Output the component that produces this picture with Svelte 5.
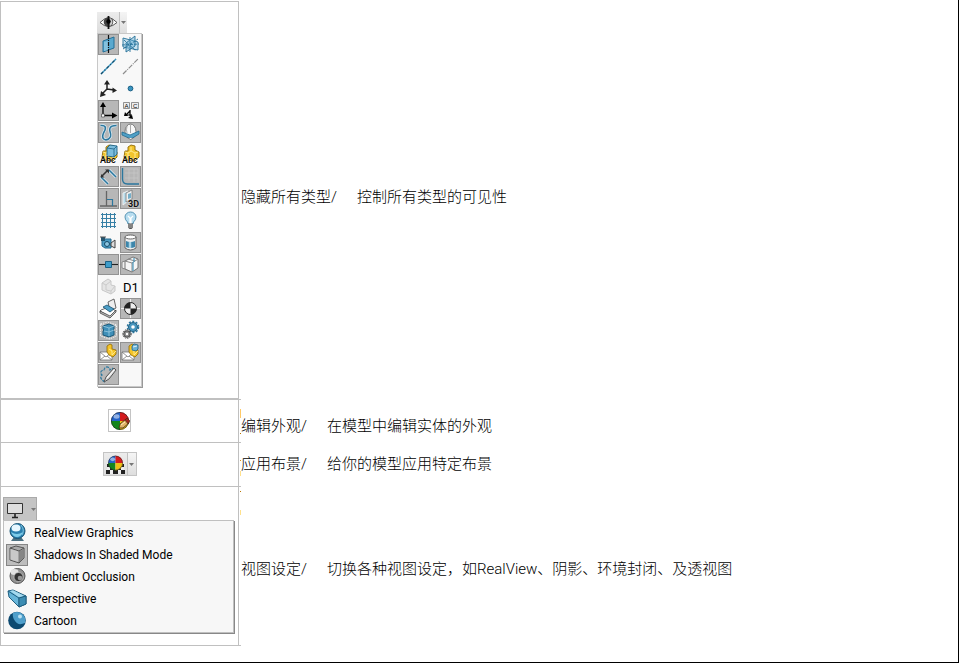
<script>
    const shape = '<path d="M5 7h3V3l3-2 4 1v4l4 2v5l-4 4-9-1-2-3z" fill="#f2c42c" stroke="#8f6a04" stroke-width=".9"/><path d="M5 8l3 1 3-2V3M8 9v6M11 7l4 2v6M15 9l3-1" fill="none" stroke="#ffed94" stroke-width=".9"/>';
    const cube = '<path d="M9 4l3-3 7 1v8l-3 3-7-1z" fill="#7bbcdc" stroke="#1d6286" stroke-width=".9"/><path d="M9 4l7 1 3-3M16 5v8" fill="none" stroke="#1d6286" stroke-width=".8"/>';
    const caption = '<text x="2" y="19" font-size="9" font-family="Roboto, sans-serif" font-weight="500" fill="#000" stroke="#fff" stroke-opacity=".5" stroke-width="1" paint-order="stroke">Abc</text>';
    const envelope = '<path d="M2 10h12v8H2z" fill="#fff" stroke="#777" stroke-width=".8"/><path d="M2 10l6 5 6-5M2 18l5-4M14 18l-5-4" fill="none" stroke="#777" stroke-width=".8"/>';
    const smallShape = '<path d="M9 7V4l3-2 2 1v4l4 1v4l-3 3-4-2-2-3z" fill="#f5c428" stroke="#8f6a04" stroke-width=".8"/><path d="M11 7l3 2v4l4-4" fill="none" stroke="#ffed94" stroke-width=".9"/>';
    const ball = '<path d="M11 11V2a9 9 0 0 0-9 9z" fill="#2463c9"/><path d="M11 11V2a9 9 0 0 1 9 9z" fill="#d41b1e"/><path d="M11 11H2a9 9 0 0 0 9 9z" fill="#14851c"/><path d="M11 11h9a9 9 0 0 1-9 9z" fill="#efbf16"/><circle cx="11" cy="11" r="8.600" fill="none" stroke="#222" stroke-opacity=".6" stroke-width="1"/><ellipse cx="7.500" cy="6.500" rx="3" ry="2.200" fill="#fff" opacity=".5"/>';

    const icons = {
        eye: '<path d="M2 10.500Q10.500 1.500 19 10.500Q10.500 18.500 2 10.500z" fill="#fff" stroke="#555"/><circle cx="10.500" cy="10" r="4.800" fill="#444"/><path d="M11.500 6a4.200 4.200 0 0 1 0 8z" fill="#ccc"/><path d="M10.500 4v13" stroke="#111" stroke-width="1.800"/><circle cx="10.500" cy="9.500" r="2.200" fill="#000"/>',
        plane: '<path d="M5 7l11-4v11L5 18z" fill="#5aa9cf" stroke="#236f97"/><path d="M6 8l4-1v9l-4 1z" fill="#85c2de"/><path d="M10.500 1v19" stroke="#111" stroke-width="1.200" stroke-dasharray="4 1 1 1"/>',
        planes: '<path d="M3 4l15 4v8L3 13z" fill="#a6d2e8" fill-opacity=".6" stroke="#236f97" stroke-width=".9"/><path d="M6 18V9l9-7v10z" fill="#6bb2d5" fill-opacity=".5" stroke="#236f97" stroke-width=".9"/><path d="M2 11l17-1M10 3v15M4 6l12 11M3 15L18 5" stroke="#236f97" stroke-width=".9" stroke-dasharray="3 1"/>',
        axis: '<path d="M3 18L18 3" stroke="#3f9ac5" stroke-width="1.500"/><path d="M3 18L18 3" stroke="#174a66" stroke-width="1.200" stroke-dasharray="3 2 1 2"/>',
        tempAxis: '<path d="M3 18L18 3" stroke="#8d8d8d" stroke-width="1.200" stroke-dasharray="5 1 1 1"/>',
        triad: '<path d="M9 11V5M9 11l7 1M9 11l-5 5" stroke="#222" stroke-width="1.500"/><path d="M9 2L6 6.500h6zM19 12.500L14.500 9.500v5.500zM2 19l1-6 5 4z" fill="#222"/>',
        point: '<circle cx="10.500" cy="10.500" r="2.400" fill="#3a95c1" stroke="#1c6085"/>',
        origin: '<path d="M5 15V5M5 15.500h11" stroke="#000" stroke-width="1.300"/><path d="M5 2L2 7h6zM19.500 15.500L14 12.500v6z" fill="#000"/><path d="M3.500 14h3v3h-3z" fill="#fff" stroke="#555" stroke-width=".8"/>',
        datum: '<path d="M3.500 2.500h6v6h-6zM11.500 2.500h7v6h-7z" fill="#eee" stroke="#777" stroke-width=".8"/><text x="4.500" y="8" font-size="6" font-family="Liberation Sans, sans-serif">A</text><text x="13" y="8" font-size="6" font-family="Liberation Sans, sans-serif">C</text><path d="M10 11L6 15M10 10v5l1 3" stroke="#000" fill="none" stroke-width="1.300"/><path d="M13 19l-5-1 4-3zM4 16l1-4 3 4z" fill="#000"/><path d="M6 15h6" stroke="#000"/>',
        curve: '<path d="M2.500 3.500C9 3 8 7 5.500 11C3 17 7 19 10.500 17C16 13 10 10 12 6Q13 3.500 18.500 3.500" fill="none" stroke="#dcecf4" stroke-width="3"/><path d="M2.500 3.500C9 3 8 7 5.500 11C3 17 7 19 10.500 17C16 13 10 10 12 6Q13 3.500 18.500 3.500" fill="none" stroke="#2c779e" stroke-width="1.600"/>',
        parting: '<ellipse cx="10.500" cy="9.500" rx="5.500" ry="7.500" fill="#f7f7f7" stroke="#777"/><path d="M10.500 2v9M7 4q-1 4 0 7" fill="none" stroke="#aaa"/><path d="M2 10l8 3 9-4v3l-8 5-9-4z" fill="#4fa0c7" stroke="#23698e" stroke-width=".8"/><path d="M8 16q3 3 5 0" stroke="#777" fill="#fff"/>',
        annotations: shape + cube + caption,
        topAnnotations: shape + caption,
        sketch: '<path d="M3 11l7 7M11 4l7 7" stroke="#dcecf4" stroke-width="3"/><path d="M3 11l7 7M11 4l7 7" stroke="#2c779e" stroke-width="1.500"/><path d="M3 11l7-7" stroke="#333" stroke-width="1.600"/><path d="M7 3.500h4v4zM3 8v3.500h3.500z" fill="#333"/>',
        sketchPlane: '<path d="M5 3h13v13M9 3v12M14 3v13M5 7h13M5 12h13" fill="none" stroke="#c9c9c9" stroke-width=".7"/><path d="M2.500 2v11q0 5 5 5h11.500" fill="none" stroke="#2c779e" stroke-width="1.400"/>',
        relations: '<path d="M2 18h17M8.500 3v15" stroke="#656565" stroke-width="1.300"/><path d="M9 11.500h5.500V18" fill="none" stroke="#2c779e" stroke-width="1.200"/>',
        sketch3d: '<path d="M3 5l5-2v10l-5 4z" fill="#b7dcec" stroke="#eee"/><path d="M6 5l6-3v9l-6 3z" fill="#f1f1f1" stroke="#777" stroke-width=".8"/><path d="M8 6l3-1v5l-3 1z" fill="#75afca"/><text x="8" y="19" font-size="9" font-weight="bold" font-family="Roboto, sans-serif" fill="#111" stroke="#ccc" stroke-width="1" paint-order="stroke">3D</text>',
        grid: '<path d="M4.500 3v15M8.500 3v15M12.500 3v15M16.500 3v15M3 4.500h15M3 8.500h15M3 12.500h15M3 16.500h15" stroke="#367fa5" stroke-width="1"/>',
        bulb: '<path d="M7.500 12q-2.500-2-2.500-5a5.500 5 0 0 1 11 0q0 3-2.500 5l-.5 2H8z" fill="#b7ddf0" stroke="#5795b5"/><path d="M8 6l2 2v6M13 6l-2 2v6" fill="none" stroke="#fff" stroke-width="1.200"/><path d="M8 13.500h5v4L11.500 19h-2L8 17.500z" fill="#555"/><path d="M8 15h5M8 17h5" stroke="#ddd" stroke-width=".7"/>',
        camera: '<path d="M4 8l3-1h6v9H7l-3-2z" fill="#4c9dc4" stroke="#23698e"/><circle cx="9" cy="12" r="2.500" fill="#8cc5e0" stroke="#154966"/><path d="M13 11l4-3v8l-4-2z" fill="#ddd" stroke="#444"/><path d="M3 5h4v4H3z" fill="#25556e"/><path d="M2 5h6" stroke="#555"/>',
        decal: '<path d="M5 5v11q5.500 4 11 0V5z" fill="#eee" stroke="#666"/><path d="M6 9q4.500 2 9 0v6q-4.500 2-9 0z" fill="#3d86ab"/><path d="M10 10v6" stroke="#a7d3e6" stroke-width="2.500"/><ellipse cx="10.500" cy="5" rx="5.500" ry="2" fill="#fff" stroke="#666"/>',
        weld: '<path d="M1 10.500h19" stroke="#ddd" stroke-width="3"/><path d="M1 10.500h19" stroke="#222" stroke-width="1.500"/><path d="M7.500 7.500h6v6h-6z" fill="#3f9dca" stroke="#1d6286"/>',
        welds: '<path d="M2 8l6-2v10l-6-2z" fill="#eee" stroke="#888"/><path d="M5 7l8-4 5 2v9l-6 4-7-3z" fill="#f5f5f5" stroke="#777"/><path d="M5 7l7 2 6-4M12 9v9M8 5l7 2" fill="none" stroke="#888"/><path d="M13 8v9M14 4v4" stroke="#4b99be" stroke-width="1.200"/>',
        ghost: '<path d="M4 7l6-4 3 2v4l4 1v5l-4 3-9-4z" fill="#e5e5e5" stroke="#c8c8c8"/><path d="M4 7l4 2 5-4M8 9v5l5 1 4-5M13 15v3" fill="none" stroke="#cbcbcb"/>',
        dimension: '<text x="3" y="16" font-size="13" font-weight="400" font-family="Roboto, sans-serif" fill="#000">D1</text>',
        cosmetic: '<path d="M10 4l6-3 2 9-6 3z" fill="#eee" stroke="#666"/><path d="M3 12l8-3 7 4-6 6-10-6z" fill="#fff" stroke="#444" stroke-width=".8"/><path d="M5 9l7 5 4-3-7-4z" fill="#4d9fc7" stroke="#19516e" stroke-width=".8"/><path d="M2 13v2l10 5 6-6v-2l-6 6z" fill="#bbb" stroke="#333" stroke-width=".7"/>',
        centerMass: '<path d="M1 10.500h19M10.500 1v19" stroke="#eee"/><circle cx="10.500" cy="10.500" r="6" fill="#eee" stroke="#222"/><path d="M10.500 10.500v-6a6 6 0 0 0-6 6zM10.500 10.500v6a6 6 0 0 0 6-6z" fill="#222"/>',
        bounding: '<path d="M2.500 4l7-2 9 3v11l-7 3-9-3zM2.500 4l9 3 7-2M11.500 7v12" fill="none" stroke="#f3f3f3" stroke-dasharray="1.500 1"/><path d="M5 6l6-2 5 2v3l-1 1 1 1v4l-5 2-6-2v-4l1-1-1-1z" fill="#3f8fb8" stroke="#1d5a7a"/><path d="M5 6l6 2 5-2M11 8v8M6 11l5 1 5-2" fill="none" stroke="#9bcbe2" stroke-width=".8"/>',
        gears: '<circle cx="13" cy="7" r="4.500" fill="#4795bd" stroke="#1d5b7d"/><circle cx="13" cy="7" r="5.500" fill="none" stroke="#2c779e" stroke-width="1.600" stroke-dasharray="2 1.500"/><circle cx="13" cy="7" r="1.800" fill="#fff"/><circle cx="7" cy="14" r="3.300" fill="#888" stroke="#444"/><circle cx="7" cy="14" r="4.300" fill="none" stroke="#555" stroke-dasharray="1.500 1"/><circle cx="7" cy="14" r="1.200" fill="#fff"/>',
        mail: envelope + smallShape,
        mailCube: envelope + smallShape + '<path d="M12 4l2-2 4 1v4l-2 2-4-1z" fill="#6bb2d5" stroke="#1d6286" stroke-width=".8"/><path d="M13 5l4-1" stroke="#fff" stroke-width=".8"/>',
        freehand: '<path d="M7 18C2 15 2 13 4 11C1 8 4 6 6 6C7 1 12 3 12 6L15 4" fill="none" stroke="#2c779e" stroke-width="1.200" stroke-dasharray="3 1"/><path d="M6 18l2-5 8-9 2 2-7 9z" fill="#ddd" stroke="#555"/><path d="M9 14l7-8" stroke="#fff"/>',
        monitor: '<path d="M2.500 4.500h15v10h-15z" fill="#dedede" stroke="#333"/><path d="M10 15v3M7 18.500h6" stroke="#222" stroke-width="1.600"/>',
        appearance: ball + '<path d="M10 18l1-4 6-5 3 4-6 5z" fill="#e0b268" stroke="#3b2c10" stroke-width=".8"/><path d="M16 10l2-2 3 3-2 3z" fill="#a3271f" stroke="#3b2c10" stroke-width=".6"/><path d="M12 15l4-3" stroke="#fff0b8"/>',
        realView: '<path d="M5 19l3-4h7l3 4z" fill="#4d7182"/><circle cx="11.500" cy="9" r="7.500" fill="#2b7fae" stroke="#185373"/><path d="M5 10q6 4 12 0-2 5-6 5T5 10z" fill="#7fcdea"/><ellipse cx="10" cy="6" rx="4.500" ry="3.500" fill="#e7f7ff"/><path d="M15 3q4 5 1 10" fill="none" stroke="#7cc3df"/>',
        shadows: '<path d="M4 4l6-2 8 2v10l-5 5-9-3z" fill="#aaa" stroke="#555"/><path d="M4 4l9 3 5-3M13 7v12" fill="none" stroke="#555"/><path d="M4.500 5l8 2.500v10.500L4.500 15.500z" fill="#c8c8c8"/><path d="M13.500 7.500l4-2.500v9l-4 4z" fill="#858585"/>',
        occlusion: '<circle cx="11.500" cy="10" r="7.500" fill="#949494" stroke="#555"/><ellipse cx="8.500" cy="6" rx="4" ry="3" fill="#e3e3e3"/><circle cx="12.500" cy="11" r="4.500" fill="#333" stroke="#ddd" stroke-width=".6"/><circle cx="14" cy="12" r="2.300" fill="#999"/>',
        perspective: '<path d="M2 3l5-1 13 6v8l-7 3L3 9z" fill="#67b5d9" stroke="#205f80"/><path d="M2 3l11 7 7-2M13 10v9" fill="none" stroke="#205f80"/><path d="M13 10l7-2v8l-7 3z" fill="#3c8db3" stroke="#205f80"/><path d="M4 3l3-.7 11 5.500-5 1.500z" fill="#a5d9ee"/>',
        cartoon: '<circle cx="11" cy="10.500" r="8.800" fill="#0d4a71"/><path d="M7 3a8.500 8.500 0 0 1 12 10Q12 16 9 11 6 7 7 3z" fill="#4f9fcb"/><circle cx="14" cy="6.500" r="2" fill="#b9e1f2"/>'
    };

    icons.scene = '<path d="M3 9h15l2 11H1z" fill="#eee"/><path d="M2 10h3v3H2zM16 10h3v3h-3zM5 13h3v3H5zM13 13h3v3h-3zM1 16h4v4H1zM8 16h5v4H8zM16 16h4v4h-4z" fill="#222"/><g transform="translate(1.500 0) scale(.82)">' + ball + '</g>';

    const tools = [
        ['plane', true], ['planes', false],
        ['axis', false], ['tempAxis', false],
        ['triad', false], ['point', false],
        ['origin', true], ['datum', false],
        ['curve', true], ['parting', true],
        ['annotations', false], ['topAnnotations', false],
        ['sketch', true], ['sketchPlane', true],
        ['relations', true], ['sketch3d', true],
        ['grid', false], ['bulb', false],
        ['camera', false], ['decal', true],
        ['weld', true], ['welds', true],
        ['ghost', false], ['dimension', false],
        ['cosmetic', false], ['centerMass', true],
        ['bounding', true], ['gears', false],
        ['mail', true], ['mailCube', true],
        ['freehand', true]
    ];

    const settings = [
        { id: 'realView', label: 'RealView Graphics' },
        { id: 'shadows', label: 'Shadows In Shaded Mode' },
        { id: 'occlusion', label: 'Ambient Occlusion' },
        { id: 'perspective', label: 'Perspective' },
        { id: 'cartoon', label: 'Cartoon' }
    ];

    let pressed = $state(Object.fromEntries(tools));
    let activeSetting = $state('shadows');
</script>

{#snippet icon(name)}
    <svg class="icon" viewBox="0 0 21 21" aria-hidden="true">{@html icons[name]}</svg>
{/snippet}

{#snippet arrow()}
    <svg class="arrow" viewBox="0 0 5 3" aria-hidden="true"><path d="M0 0h5L2.500 3z" /></svg>
{/snippet}

<main class="sheet">
    <table>
        <tbody>
            <tr class="types">
                <th scope="row">
                    <div class="toolbox">
                        <div class="split">
                            <button aria-label="隐藏所有类型">{@render icon('eye')}</button>
                            <button class="drop" aria-label="展开">{@render arrow()}</button>
                        </div>
                        <div class="palette">
                            {#each tools as [name]}
                                <button class="tool" class:pressed={pressed[name]} aria-label={name} aria-pressed={pressed[name]} onclick={() => pressed[name] = !pressed[name]}>
                                    {@render icon(name)}
                                </button>
                            {/each}
                        </div>
                    </div>
                </th>
                <td><span class="term">隐藏所有类型/</span>控制所有类型的可见性</td>
            </tr>
            <tr class="appearance">
                <th scope="row">
                    <button class="single" aria-label="编辑外观">{@render icon('appearance')}</button>
                </th>
                <td><span class="term">编辑外观/</span>在模型中编辑实体的外观</td>
            </tr>
            <tr class="scene">
                <th scope="row">
                    <div class="split framed">
                        <button aria-label="应用布景">{@render icon('scene')}</button>
                        <button class="drop" aria-label="展开">{@render arrow()}</button>
                    </div>
                </th>
                <td><span class="term">应用布景/</span>给你的模型应用特定布景</td>
            </tr>
            <tr class="view">
                <th scope="row">
                    <button class="opener" aria-label="视图设定">{@render icon('monitor')}{@render arrow()}</button>
                    <div class="menu">
                        {#each settings as item}
                            <button class="item" onclick={() => activeSetting = item.id}>
                                <span class="mark" class:active={activeSetting === item.id}>{@render icon(item.id)}</span>
                                {item.label}
                            </button>
                        {/each}
                    </div>
                </th>
                <td><span class="term">视图设定/</span>切换各种视图设定，如RealView、阴影、环境封闭、及透视图</td>
            </tr>
        </tbody>
    </table>
</main>

<style>
    :global(body) {background: #fff;}
    .sheet {padding: 1px 0 16px; border-right: 1px solid #000; border-bottom: 1px solid #000; color: #000; font-family: "Noto Sans", "Noto Sans CJK SC", sans-serif;}
    table {width: 100%; border-spacing: 0; table-layout: fixed; border-top: 1px solid transparent;}
    th, td {box-sizing: border-box; padding: 0; font-weight: normal;}
    th {width: 239px; border: solid #c0c0c0; border-width: 0 1px 1px; vertical-align: top; text-align: left;}
    td {
        --rule: linear-gradient(#c0c0c0, #c0c0c0) left bottom / 2px 1px no-repeat;
        padding-left: 2px; background: var(--rule); vertical-align: middle;
        font-family: Roboto, "Noto Sans CJK SC", sans-serif; font-size: 15px; font-weight: 300; line-height: 22px;
    }
    button {display: flex; align-items: center; justify-content: center; box-sizing: border-box; margin: 0; padding: 0; border: none; background: none; color: inherit; font: inherit;}
    .term {display: inline-block; margin-right: 20px;}
    .icon {display: block; width: 21px; height: 21px; flex: none;}
    .arrow {display: block; width: 5px; height: 3px; fill: #777; flex: none;}

    .types th {padding: 10px 0 11px; border-bottom-width: 2px; box-shadow: 0 -1px #c0c0c0;}
    .types td {padding-bottom: 8px;}
    .toolbox {width: 45px; margin: 0 auto;}
    .split {display: flex; width: 30px; height: 21px; background: linear-gradient(#ececec, #dcdcdc);}
    .split button {width: 22px;}
    .split .drop {width: 8px; border-left: 1px solid #c0c0c0; background: linear-gradient(#f5f5f5, #dedede);}
    .palette {display: grid; grid-template-columns: 21px 21px; gap: 1px; padding-bottom: 1px; border: 1px solid #c8c8c8; background: #f8f8f8; box-shadow: 1px 1px 0 #999;}
    .tool {width: 21px; height: 21px;}
    .tool.pressed {background: #b7b7b7; box-shadow: inset 0 0 0 1px #929292;}

    .appearance th {padding: 9px 0 10px;}
    .appearance td {
        padding-top: 8px;
        background: linear-gradient(#ffc966, #ffc966) 1px 9px / 1px 9px no-repeat, linear-gradient(#b97500, #b97500) 1px 33px / 1px 1px no-repeat, var(--rule);
    }
    .single {width: 23px; height: 23px; margin: 0 auto; border: 1px solid #c4c4c4; background: #fff;}

    .scene th {padding: 9px 0 10px;}
    .scene td {
        padding-bottom: 2px;
        background: linear-gradient(#d9950f, #d9950f) 1px 17px / 1px 1px no-repeat, linear-gradient(#ffe18c, #ffe18c) 1px 28px / 1px 5px no-repeat, var(--rule);
    }
    .framed {box-sizing: border-box; width: 34px; height: 24px; margin: 0 auto; border: 1px solid #c4c4c4;}
    .framed button {width: 23px;}
    .framed .drop {width: 9px;}

    .view th {padding: 10px 4px 12px 2px;}
    .view td {
        padding-top: 4px;
        background: linear-gradient(#b97500, #b97500) 1px 4px / 1px 1px no-repeat, linear-gradient(#ffe18c, #ffe18c) 1px 23px / 1px 5px no-repeat, var(--rule);
    }
    .opener {width: 34px; height: 23px; gap: 5px; border: 1px solid #aaa; border-bottom: none; background: #c4c4c4;}
    .menu {padding-top: 1px; border: 1px solid #c0c0c0; background: #f7f7f7; box-shadow: 1px 1px 0 #888;}
    .item {justify-content: flex-start; width: 100%; height: 22px; gap: 6px; padding-left: 2px; font-family: Roboto, "Open Sans", sans-serif; font-size: 12px; line-height: 22px;}
    .mark {display: flex; box-sizing: border-box; width: 22px; height: 22px;}
    .mark.active {background: #bdbdbd; box-shadow: inset 0 0 0 1px #858585;}
</style>
